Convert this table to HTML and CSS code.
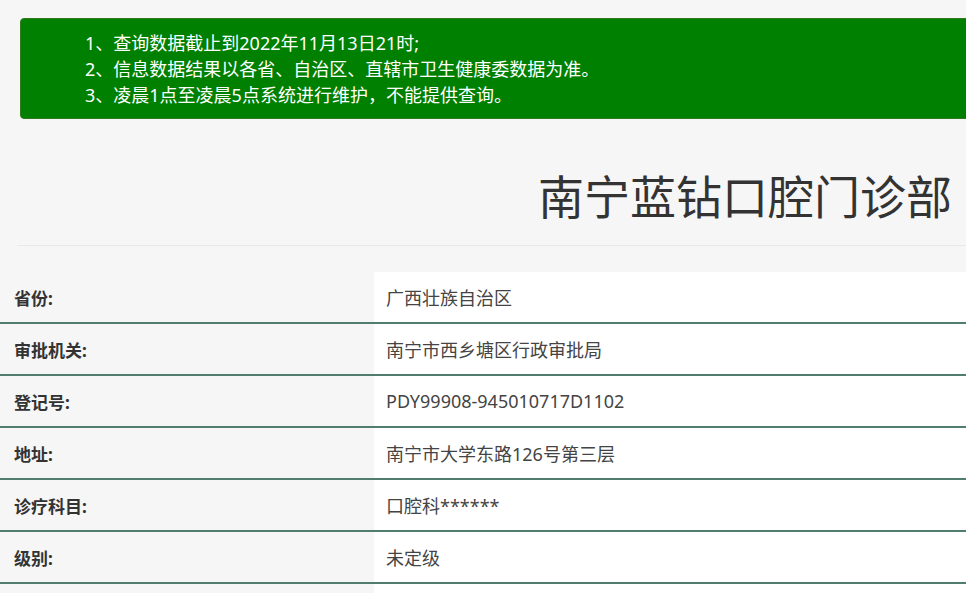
FILE: index.html
```html
<!DOCTYPE html>
<html lang="zh-CN">
<head>
<meta charset="utf-8">
<title>南宁蓝钻口腔门诊部</title>
<link rel="stylesheet" href="styles.css">
</head>
<body>
<div class="notice">
  <p>1、查询数据截止到2022年11月13日21时;</p>
  <p>2、信息数据结果以各省、自治区、直辖市卫生健康委数据为准。</p>
  <p>3、凌晨1点至凌晨5点系统进行维护，不能提供查询。</p>
</div>
<div class="header">
  <h1 class="title">南宁蓝钻口腔门诊部</h1>
</div>
<div class="info">
  <div class="row"><div class="label">省份:</div><div class="value">广西壮族自治区</div></div>
  <div class="row"><div class="label">审批机关:</div><div class="value">南宁市西乡塘区行政审批局</div></div>
  <div class="row"><div class="label">登记号:</div><div class="value">PDY99908-945010717D1102</div></div>
  <div class="row"><div class="label">地址:</div><div class="value">南宁市大学东路126号第三层</div></div>
  <div class="row"><div class="label">诊疗科目:</div><div class="value">口腔科******</div></div>
  <div class="row"><div class="label">级别:</div><div class="value">未定级</div></div>
  <div class="row"><div class="label">&nbsp;</div><div class="value">&nbsp;</div></div>
</div>
</body>
</html>
```
FILE: styles.css
```css
html, body {
  margin: 0;
  padding: 0;
}
body {
  background: #f6f6f6;
  font-family: "Noto Sans", "Noto Sans CJK SC", sans-serif;
  color: #333;
  overflow: hidden;
}
.notice {
  margin: 18px -20px 0 20px;
  padding: 11px 0 10px 64px;
  background: #008000;
  border: 1px solid #2f7a1f;
  border-radius: 4px;
  color: #ffffff;
  font-size: 18px;
  line-height: 26px;
}
.notice p {
  margin: 0;
}
.header {
  margin: 0 0 0 17px;
  border-bottom: 1px solid #e9e9e9;
  padding: 48px 14px 23px 0;
  display: flex;
  justify-content: flex-end;
}
.title {
  margin: 0;
  font-family: "Noto Sans CJK SC", sans-serif;
  font-weight: 400;
  font-size: 46px;
  line-height: 55px;
  color: #333;
}
.info {
  margin-top: 26px;
}
.row {
  display: grid;
  grid-template-columns: 374px 1fr;
  border-bottom: 2px solid #527d6e;
}
.label {
  height: 50px;
  display: flex;
  align-items: center;
  padding-left: 14px;
  font-weight: 700;
  font-size: 17px;
  color: #333;
}
.value {
  height: 50px;
  display: flex;
  align-items: center;
  padding-left: 12px;
  background: #ffffff;
  font-size: 18px;
  color: #444;
}
```
